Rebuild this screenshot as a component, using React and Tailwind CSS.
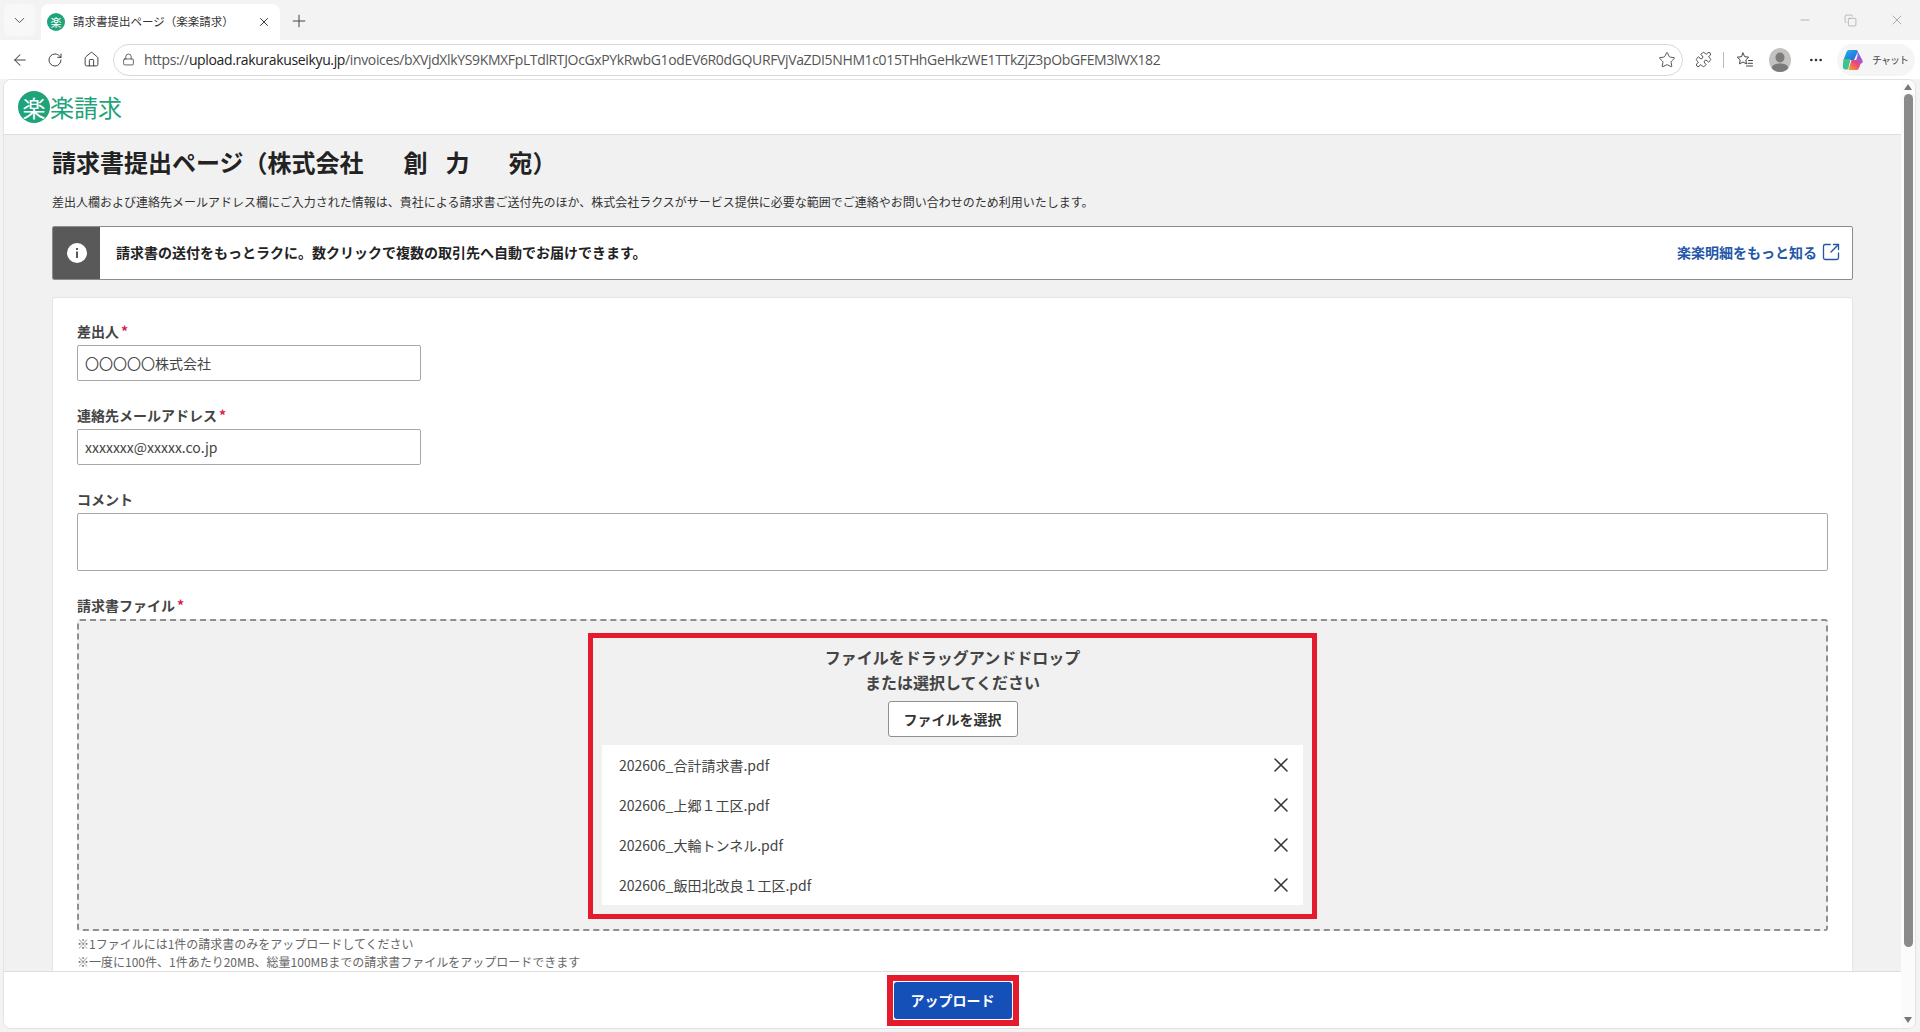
import React from 'react';
import { ChevronDown, X, Plus, ArrowLeft, RotateCw, Home, Lock, Star, Puzzle, Ellipsis, Minus, Copy, SquareArrowOutUpRight } from 'lucide-react';

const FONT = { fontFamily: '"Noto Sans CJK JP", "Noto Sans", sans-serif' };

const files = [
    '202606_合計請求書.pdf',
    '202606_上郷１工区.pdf',
    '202606_大輪トンネル.pdf',
    '202606_飯田北改良１工区.pdf',
];

const CopilotLogo = () => (
    <svg width="24" height="24" viewBox="0 0 24 24">
        <defs>
            <linearGradient id="cpA" x1="0" y1="0" x2="1" y2="1">
                <stop offset="0" stopColor="#1fb5e8" />
                <stop offset="1" stopColor="#2a5fd8" />
            </linearGradient>
            <linearGradient id="cpB" x1="0" y1="1" x2="1" y2="0">
                <stop offset="0" stopColor="#f5a623" />
                <stop offset="0.6" stopColor="#e8487c" />
                <stop offset="1" stopColor="#a855d8" />
            </linearGradient>
        </defs>
        <path d="M8 2h7c1 0 1.600.6 1.900 1.500L13 12H2.500L5.500 4C6 2.700 7 2 8 2z" fill="url(#cpA)" />
        <path d="M16.500 3l5 9.500c.7 1.500-.2 3-1.500 3h-6l2.500-7.500z" fill="#8f5be0" />
        <path d="M2.500 11h7L7.500 20c-.3.8-1 1.500-1.600 1.500H4.500c-1.800 0-3-1.500-2.700-3.500z" fill="#3cc48a" />
        <path d="M10.500 12H21l-3 8c-.4 1-1.200 2-2.200 2H7.500z" fill="url(#cpB)" />
    </svg>
);

const FavoritesIcon = () => (
    <svg width="18" height="18" viewBox="0 0 18 18" fill="none" stroke="#444" strokeWidth="1" strokeLinejoin="round" strokeLinecap="round">
        <path d="M7 2l1.700 3.700 4 .5-2.900 2.700.7 4L7 11l-3.500 1.900.7-4L1.300 6.200l4-.5z" />
        <path d="M12.500 9.500h4M12 12.300h4.500M10.500 15h6" />
    </svg>
);

const AvatarIcon = () => (
    <svg width="22" height="24" viewBox="0 0 22 24">
        <ellipse cx="11" cy="12" rx="11" ry="12" fill="#c4c2c0" />
        <ellipse cx="11" cy="9.500" rx="4.500" ry="5" fill="#7d7b79" />
        <path d="M2.500 20c1-3.500 4.500-4.500 8.500-4.500s7.500 1 8.500 4.500c-2 2.500-5 4-8.500 4s-6.500-1.500-8.500-4z" fill="#7d7b79" />
    </svg>
);

const InfoIcon = () => (
    <svg width="20" height="20" viewBox="0 0 20 20">
        <circle cx="10" cy="10" r="10" fill="#fff" />
        <rect x="9" y="5" width="2" height="2" fill="#595959" />
        <rect x="9" y="8.500" width="2" height="6.500" fill="#595959" />
    </svg>
);

const Chrome = () => (
    <div className="shrink-0">
        {/* tab strip */}
        <div className="h-10 bg-[#f3f3f3] flex items-end pl-1">
            <div className="w-[31px] h-8 mb-1 flex items-center justify-center rounded-md bg-[#f8f8f8] text-[#555]">
                <ChevronDown size={17} strokeWidth={1.4} />
            </div>
            <div className="ml-[6px] w-[239px] h-9 bg-white rounded-t-lg flex items-center pl-[6px] pr-[9px]">
                <div className="w-[18px] h-[18px] rounded-full bg-[#1fa37a] text-white text-[11px] leading-[18px] text-center shrink-0">楽</div>
                <span className="ml-[8px] text-[11.5px] text-[#333] whitespace-nowrap">請求書提出ページ（楽楽請求）</span>
                <X size={14} strokeWidth={1.7} className="ml-auto text-[#333]" />
            </div>
            <Plus size={20} strokeWidth={1.2} className="ml-[9px] mb-[9px] text-[#444]" />
            <div className="ml-auto flex items-center h-10 pr-[15px] text-[#888] gap-8 self-start">
                <Minus size={14} strokeWidth={1} />
                <Copy size={13} strokeWidth={1} />
                <X size={16} strokeWidth={1} />
            </div>
        </div>
        {/* address row */}
        <div className="h-[39px] bg-white flex items-center pl-[11px]">
            <ArrowLeft size={18} strokeWidth={1.4} className="text-[#444]" />
            <RotateCw size={16} strokeWidth={1.5} className="ml-[18px] text-[#444]" />
            <Home size={17} strokeWidth={1.4} className="ml-[20px] text-[#444]" />
            <div className="ml-[13px] w-[1570px] h-8 rounded-2xl border border-[#d8d8d8] flex items-center pl-2 pr-[6px]">
                <Lock size={13} strokeWidth={1.5} className="text-[#444]" />
                <span className="ml-[9px] text-[14px] text-[#555] whitespace-nowrap" style={{ fontFamily: '"Open Sans", sans-serif', letterSpacing: '-0.36px' }}>
                    https://<span className="text-[#222]">upload.rakurakuseikyu.jp</span>/invoices/bXVjdXlkYS9KMXFpLTdlRTJOcGxPYkRwbG1odEV6R0dGQURFVjVaZDI5NHM1c015THhGeHkzWE1TTkZjZ3pObGFEM3lWX182
                </span>
                <Star size={18} strokeWidth={1.2} className="ml-auto text-[#444]" />
            </div>
            <Puzzle size={17} strokeWidth={1.3} className="ml-[12px] text-[#444]" />
            <div className="ml-[11px] w-px h-4 bg-[#bbb]" />
            <div className="ml-[12px]"><FavoritesIcon /></div>
            <div className="ml-[15px]"><AvatarIcon /></div>
            <Ellipsis size={16} strokeWidth={2} className="ml-[17px] text-[#333]" />
            <div className="ml-[13px] w-[78px] h-8 rounded-full bg-[#f5f5f5] flex items-center pl-[4px] gap-[7px]">
                <CopilotLogo />
                <span className="text-[10px] tracking-[-1px] text-[#444] whitespace-nowrap">チャット</span>
            </div>
        </div>
    </div>
);

const Field = ({ label, required, children, className = '' }) => (
    <div className={className}>
        <div className="text-[14px] leading-[20px] font-bold text-[#444] mb-1">
            {label}
            {required && <span className="text-[#d6204e] ml-0.5">*</span>}
        </div>
        {children}
    </div>
);

const TextBox = ({ value }) => (
    <div className="w-[344px] h-9 bg-white border border-[#a8a8a8] rounded-[2px] px-[7px] text-[14px] leading-[34px] text-[#444]">{value}</div>
);

const App = () => {
    return (
        <div className="w-[1920px] h-[1032px] bg-[#f3f3f3] flex flex-col overflow-hidden text-[#222]" style={FONT}>
            <Chrome />
            <div className="ml-[3px] mr-[4px] h-[950px] bg-white border border-[#e2e2e2] rounded-lg flex overflow-hidden">
                <div className="flex-1 min-w-0 flex flex-col">
                    {/* header */}
                    <div className="h-[55px] shrink-0 bg-white border-b border-[#dedede] flex items-center pl-[14px]">
                        <div className="w-8 h-8 rounded-full bg-[#1fa37a] text-white text-[23px] leading-8 text-center">楽</div>
                        <span className="text-[24px] leading-8 text-[#1fa37a] whitespace-nowrap">楽請求</span>
                    </div>

                    {/* content */}
                    <div className="flex-1 min-h-0 overflow-hidden bg-[#f1f1f1] pl-[48px] pr-[48px]">
                        <h1 className="mt-[9px] text-[24px] leading-9 font-bold text-[#222] whitespace-nowrap">
                            請求書提出ページ（株式会社<span className="ml-10">創</span><span className="ml-[18px]">力</span><span className="ml-[39px]">宛）</span>
                        </h1>
                        <p className="mt-[13px] text-[12px] leading-[18px] text-[#333] whitespace-nowrap">
                            差出人欄および連絡先メールアドレス欄にご入力された情報は、貴社による請求書ご送付先のほか、株式会社ラクスがサービス提供に必要な範囲でご連絡やお問い合わせのため利用いたします。
                        </p>

                        {/* info banner */}
                        <div className="mt-[15px] h-[54px] bg-white border border-[#8c8c8c] rounded-[2px] flex items-center overflow-hidden">
                            <div className="w-[47px] h-full bg-[#595959] flex items-center justify-center">
                                <InfoIcon />
                            </div>
                            <span className="ml-[16px] mb-[2px] text-[14px] font-bold text-[#222]">請求書の送付をもっとラクに。数クリックで複数の取引先へ自動でお届けできます。</span>
                            <span className="ml-auto mb-[2px] flex items-center gap-1 pr-[11px] text-[14px] font-bold text-[#2456a8]">
                                楽楽明細をもっと知る
                                <SquareArrowOutUpRight size={20} strokeWidth={1.6} />
                            </span>
                        </div>

                        {/* form card */}
                        <div className="mt-[17px] bg-white border border-[#e4e4e4] rounded-[3px] pl-[24px] pr-[24px] pt-[23px] h-[800px]">
                            <Field label="差出人" required>
                                <TextBox value="〇〇〇〇〇株式会社" />
                            </Field>
                            <Field label="連絡先メールアドレス" required className="mt-[24px]">
                                <TextBox value="xxxxxxx@xxxxx.co.jp" />
                            </Field>
                            <Field label="コメント" className="mt-[24px]">
                                <div className="h-[58px] bg-white border border-[#a8a8a8] rounded-[2px]" />
                            </Field>
                            <Field label="請求書ファイル" required className="mt-[24px]">
                                <div className="h-[312px] border-2 border-dashed border-[#8f8f8f] rounded-[3px] bg-[#f1f1f1] flex justify-center pt-[12px]">
                                    {/* red box is the annotation in the screenshot */}
                                    <div className="w-[729px] h-[286px] border-[5px] border-[#e31b2c] px-[9px] pt-[7px] flex flex-col items-center">
                                        <div className="text-[16px] leading-[25px] font-bold text-[#444] text-center">
                                            ファイルをドラッグアンドドロップ<br />または選択してください
                                        </div>
                                        <div className="mt-[6px] w-[130px] h-9 bg-white border border-[#8f8f8f] rounded-[3px] text-[14px] font-bold text-[#333] flex items-center justify-center">ファイルを選択</div>
                                        <div className="mt-[8px] w-full bg-white">
                                            {files.map((name) => (
                                                <div key={name} className="h-10 pl-[17px] pr-[10px] flex items-center justify-between text-[14px] text-[#444]">
                                                    <span>{name}</span>
                                                    <X size={24} strokeWidth={1.5} className="text-[#333]" />
                                                </div>
                                            ))}
                                        </div>
                                    </div>
                                </div>
                            </Field>
                            <div className="mt-[4px] text-[12px] leading-[18px] text-[#666]">
                                <p>※1ファイルには1件の請求書のみをアップロードしてください</p>
                                <p>※一度に100件、1件あたり20MB、総量100MBまでの請求書ファイルをアップロードできます</p>
                            </div>
                        </div>
                    </div>

                    {/* footer */}
                    <div className="h-[57px] shrink-0 bg-white border-t border-[#dedede] flex items-center justify-center">
                        <div className="w-[132px] h-[51px] border-[6px] border-[#e31b2c] flex items-center justify-center">
                            <div className="w-[118px] h-[37px] rounded-[3px] bg-[#1450b8] text-white text-[14px] font-bold flex items-center justify-center">アップロード</div>
                        </div>
                    </div>
                </div>

                {/* page scrollbar */}
                <div className="w-[14px] shrink-0 bg-[#fbfbfb] flex flex-col items-center pt-[4px] pb-[5px]">
                    <div className="w-0 h-0 border-x-[4px] border-x-transparent border-b-[6px] border-b-[#777]" />
                    <div className="mt-[4px] w-[9px] h-[853px] rounded-full bg-[#8a8a8a]" />
                    <div className="mt-auto w-0 h-0 border-x-[4px] border-x-transparent border-t-[6px] border-t-[#777]" />
                </div>
            </div>
        </div>
    );
};

export default App;
